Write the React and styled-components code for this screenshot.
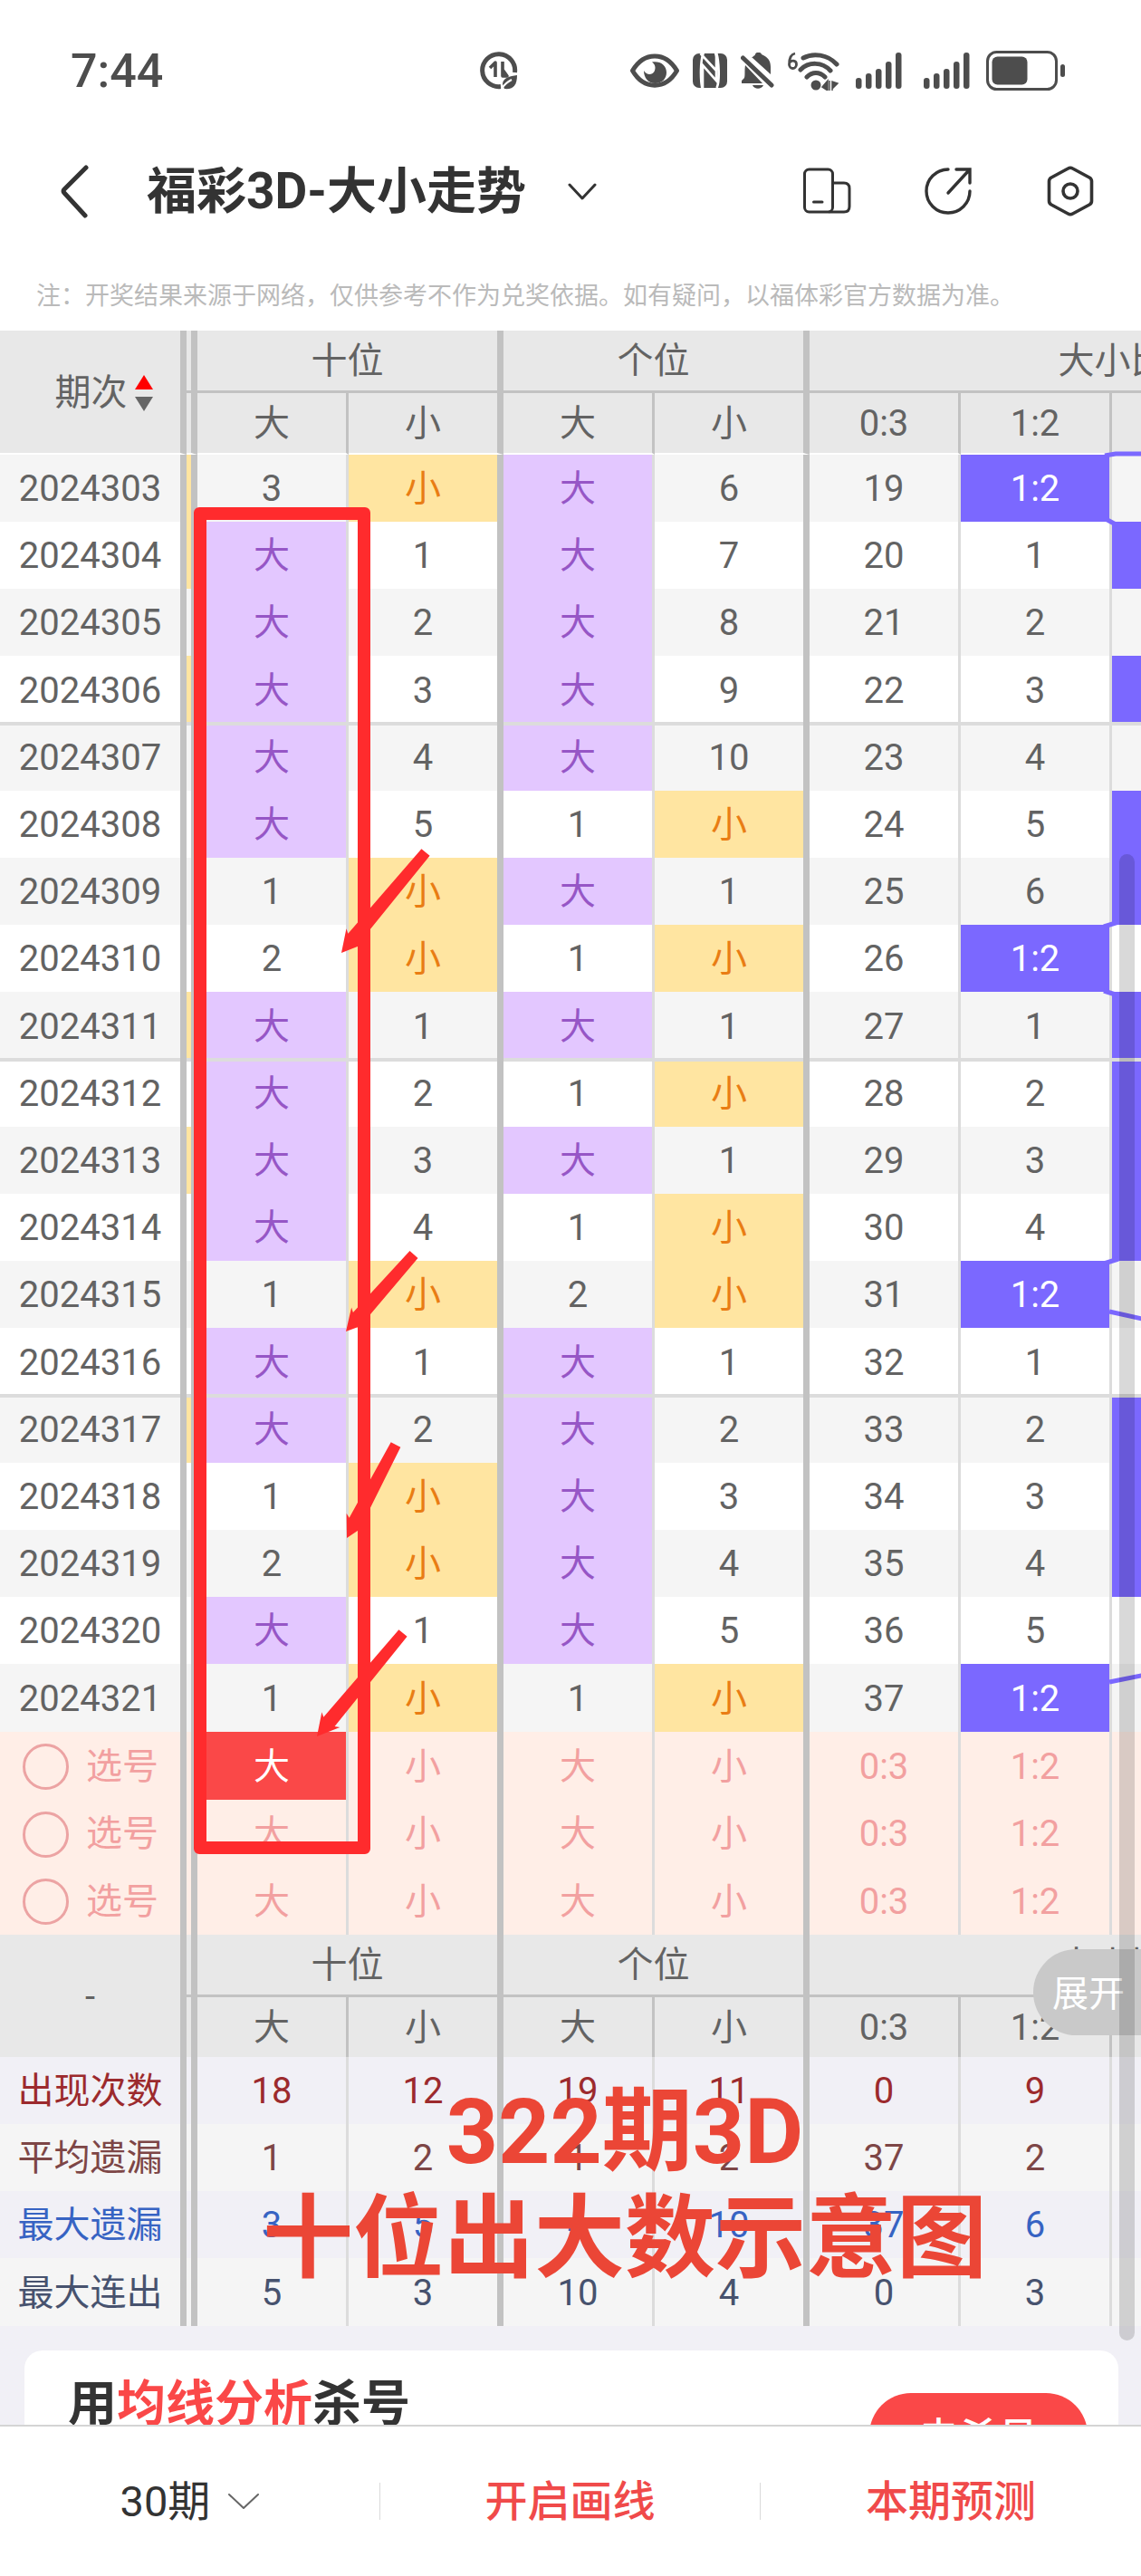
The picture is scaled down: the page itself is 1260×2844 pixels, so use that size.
import styled, { createGlobalStyle, css } from "styled-components";

const GlobalStyle = createGlobalStyle`
    * {
        box-sizing: border-box;
    }

    body {
        margin: 0;
        background: #fff;
        color: #333;
        font-family: Roboto, "Noto Sans CJK SC", sans-serif;
    }

    button,
    select {
        margin: 0;
        padding: 0;
        border: 0;
        background: none;
        color: inherit;
        font: inherit;
    }

    svg {
        display: block;
        flex: none;
    }
`;

// period, edge of the hundreds column, tens big/small, units big/small, 0:3, 1:2, 2:1
const DRAWS = [
    ["2024303", "小", "3", "小", "大", "6", "19", "1:2", ""],
    ["2024304", "小", "大", "1", "大", "7", "20", "1", "2:1"],
    ["2024305", "", "大", "2", "大", "8", "21", "2", ""],
    ["2024306", "小", "大", "3", "大", "9", "22", "3", "2:1"],
    ["2024307", "", "大", "4", "大", "10", "23", "4", ""],
    ["2024308", "", "大", "5", "1", "小", "24", "5", "2:1"],
    ["2024309", "", "1", "小", "大", "1", "25", "6", "2:1"],
    ["2024310", "", "2", "小", "1", "小", "26", "1:2", ""],
    ["2024311", "小", "大", "1", "大", "1", "27", "1", "2:1"],
    ["2024312", "", "大", "2", "1", "小", "28", "2", "2:1"],
    ["2024313", "小", "大", "3", "大", "1", "29", "3", "2:1"],
    ["2024314", "", "大", "4", "1", "小", "30", "4", "2:1"],
    ["2024315", "", "1", "小", "2", "小", "31", "1:2", ""],
    ["2024316", "", "大", "1", "大", "1", "32", "1", ""],
    ["2024317", "小", "大", "2", "大", "2", "33", "2", "2:1"],
    ["2024318", "", "1", "小", "大", "3", "34", "3", "2:1"],
    ["2024319", "", "2", "小", "大", "4", "35", "4", "2:1"],
    ["2024320", "", "大", "1", "大", "5", "36", "5", ""],
    ["2024321", "", "1", "小", "1", "小", "37", "1:2", ""],
];

const LABELS = ["大", "小", "大", "小", "0:3", "1:2"];

const STATS = [
    { name: "出现次数", color: "#9c2a2d", values: [18, 12, 19, 11, 0, 9] },
    { name: "平均遗漏", color: "#7d4646", values: [1, 2, 1, 2, 37, 2] },
    { name: "最大遗漏", color: "#3763c3", values: [3, 5, 4, 10, 37, 6] },
    { name: "最大连出", color: "#47526e", values: [5, 3, 10, 4, 0, 3] },
];

const ARROWS = [
    [470, 576, 377, 687],
    [457, 1020, 382, 1105],
    [437, 1230, 383, 1333],
    [445, 1438, 350, 1552],
];

const TREND_LINES = [
    "M1220 138L1232 136H1270",
    "M1221 208L1234 215",
    "M1219 658L1235 653",
    "M1219 729L1235 734",
    "M1219 1030L1235 1025",
    "M1225 1083L1270 1093",
    "M1225 1492L1270 1483",
];

const Shell = styled.div`
    display: flex;
    flex-direction: column;
    height: 100vh;
    overflow: hidden;
`;

const StatusBar = styled.header`
    display: flex;
    align-items: center;
    flex: none;
    height: 156px;
    padding: 0 84px 0 78px;
    color: #4d4d4d;
`;

const Clock = styled.time`
    padding-top: 2px;
    font-size: 52px;
    font-weight: 500;
    line-height: 60px;
`;

const StatusIcons = styled.div`
    display: flex;
    align-items: center;
    gap: ${({ $gap }) => $gap}px;
`;

const StatusRight = styled(StatusIcons)`
    margin-left: auto;
`;

const NavBar = styled.nav`
    display: flex;
    align-items: center;
    flex: none;
    height: 110px;
    padding: 0 50px 0 63px;
`;

const IconButton = styled.button`
    display: flex;
    align-items: center;
    justify-content: center;
`;

const Title = styled.h1`
    margin: 0 46px 0 61px;
    font-size: 55px;
    font-weight: 700;
    line-height: 64px;
`;

const NavActions = styled.div`
    display: flex;
    align-items: center;
    gap: 80px;
    margin-left: auto;
`;

const Note = styled.p`
    flex: none;
    margin: 0;
    padding: 41px 40px 18px;
    color: #bababa;
    font-size: 27px;
    line-height: 40px;
    white-space: nowrap;
`;

const Content = styled.main`
    position: relative;
    flex: 1;
    min-height: 0;
    overflow: hidden;
    background: #f1f0f6;
`;

const TableScroll = styled.div`
    overflow: hidden;
`;

const Table = styled.table`
    width: 1566px;
    table-layout: fixed;
    border-collapse: separate;
    border-spacing: 0;
    color: #636363;
    font-size: 40px;
    line-height: 48px;
    text-align: center;
`;

const Col = styled.col`
    width: ${({ $w }) => $w}px;
`;

const bar = css`
    border-right: 7px solid #c2c2c2;
`;

const HeadCell = styled.th`
    height: ${({ $group }) => ($group ? 69 : 66)}px;
    padding: 2px 0 0;
    border-right: 3px solid #c2c2c2;
    background: #e8e8e8;
    font-weight: 400;
    ${({ $group }) => $group && "border-bottom: 3px solid #c2c2c2;"}
    ${({ $bar }) => $bar && bar}
`;

const DrawHead = styled.thead`
    & tr:last-child th,
    & th[rowspan] {
        border-bottom: 2px solid #fff;
    }

    & tr:last-child th {
        height: 68px;
    }
`;

const SortLabel = styled.div`
    display: flex;
    align-items: center;
    justify-content: center;
    gap: 8px;
    padding-left: 30px;
`;

const Cell = styled.td`
    height: 74px;
    padding: 2px 0 0;
    border-right: 3px solid #dcdcdc;
    color: inherit;
    font-weight: 400;
    ${({ $bar }) => $bar && bar}
    ${({ $hit }) => $hit === "大" && "background: #e3c7ff; color: #9656c6;"}
    ${({ $hit }) => $hit === "小" && "background: #ffe5a1; color: #e97d14;"}
    ${({ $hit }) => $hit === "ratio" && "background: #7b68ff; color: #fff;"}
    ${({ $picked }) => $picked && "background: #fa4848; color: #fff;"}
`;

const Row = styled.tr`
    background: ${({ $bg }) => $bg};
    color: ${({ $color }) => $color};

    & > * {
        ${({ $start }) => $start && "box-shadow: inset 0 2px #dcdcdc;"}
        ${({ $end }) => $end && "height: 75px;"}
        ${({ $end, $ruled }) => $end && $ruled && "box-shadow: inset 0 -2px #dcdcdc;"}
    }
`;

const PickLabel = styled.label`
    display: flex;
    align-items: center;
    gap: 19px;
    padding-left: 25px;
`;

const PickRadio = styled.input`
    width: 51px;
    height: 51px;
    margin: 0;
    border: 3px solid #eca3a3;
    border-radius: 50%;
    appearance: none;
`;

const PickButton = styled.button`
    width: 100%;
    height: 72px;
`;

const Overlay = styled.svg`
    position: absolute;
    top: 0;
    left: 0;
    pointer-events: none;
`;

const Marker = styled.div`
    position: absolute;
    top: 195px;
    left: 214px;
    width: 195px;
    height: 1487px;
    border: 14px solid #ff2b2d;
    border-radius: 6px;
`;

const Caption = styled.p`
    position: absolute;
    top: 1930px;
    left: 290px;
    width: 800px;
    margin: 0;
    color: #eb4636;
    font-size: 100px;
    font-weight: 700;
    line-height: 118px;
    text-align: center;
    white-space: nowrap;
`;

const ExpandButton = styled.button`
    position: absolute;
    top: 1787px;
    right: 0;
    width: 119px;
    height: 95px;
    padding: 0 0 4px 21px;
    border-radius: 48px 0 0 48px;
    background: #c9c9c9;
    color: #fff;
    font-size: 40px;
    text-align: left;
`;

const ScrollThumb = styled.div`
    position: absolute;
    top: 578px;
    right: 7px;
    width: 17px;
    height: 1641px;
    border-radius: 9px;
    background: rgba(0, 0, 0, 0.15);
`;

const Card = styled.section`
    display: flex;
    align-items: flex-start;
    justify-content: space-between;
    height: 200px;
    margin: 27px 25px 0 27px;
    padding: 28px 34px 0 48px;
    border-radius: 20px;
    background: #fff;
`;

const CardTitle = styled.h2`
    margin: 0;
    font-size: 54px;
    font-weight: 700;
    line-height: 64px;

    & em {
        color: #fa4848;
        font-style: normal;
    }
`;

const CardButton = styled.button`
    width: 241px;
    height: 92px;
    margin-top: 19px;
    border-radius: 46px;
    background: #fa4848;
    color: #fff;
    font-size: 44px;
    font-weight: 500;
`;

const BottomBar = styled.footer`
    display: grid;
    grid-template-columns: repeat(3, 1fr);
    align-items: center;
    flex: none;
    height: 167px;
    border-top: 2px solid #d4d4d4;
    background: #fff;
    font-size: 47px;
    line-height: 60px;
`;

const BottomItem = styled.div`
    display: flex;
    align-items: center;
    justify-content: center;
    gap: 18px;
    height: 41px;
    border-right: 1px solid #dadada;

    &:last-child {
        border-right: 0;
    }
`;

const PeriodSelect = styled.select`
    appearance: none;
    outline: none;
`;

const ActionButton = styled.button`
    color: #f04a4a;
    font-weight: 500;
`;

function Chevron({ width, height, stroke, color = "#333" }) {
    return (
        <svg width={width} height={height} viewBox={`0 0 ${width} ${height}`} fill="none" stroke={color} strokeWidth={stroke} strokeLinecap="round" strokeLinejoin="round">
            <path d={`M2 2L${width / 2} ${height - 2}L${width - 2} 2`} />
        </svg>
    );
}

function SignalIcon() {
    return (
        <svg width="51" height="40" viewBox="0 0 51 40" fill="currentColor">
            <rect x="0" y="28" width="6.500" height="12" rx="3" />
            <rect x="11" y="23" width="6.500" height="17" rx="3" />
            <rect x="22" y="18" width="6.500" height="22" rx="3" />
            <rect x="33" y="10" width="6.500" height="30" rx="3" />
            <rect x="44" y="0" width="6.500" height="40" rx="3" />
        </svg>
    );
}

function DataSaverIcon() {
    return (
        <svg width="42" height="42" viewBox="0 0 42 42" fill="none" stroke="currentColor">
            <path d="M38.500 23A18 18 0 1 0 23 38.500" strokeWidth="5" />
            <path d="M17 28V12L11 18M25 11V27H30L25 20" strokeWidth="3.600" strokeLinejoin="round" />
            <path d="M41 26C33 27 25 29 25 36L27 41C37 42 41 37 41 26Z" fill="currentColor" stroke="none" />
            <path d="M24 41C27 36 31 33 35 31" stroke="#fff" strokeWidth="2" />
        </svg>
    );
}

function EyeIcon() {
    return (
        <svg width="54" height="38" viewBox="0 0 54 38">
            <path d="M2.500 19C15 -2.500 39 -2.500 51.500 19C39 40.500 15 40.500 2.500 19Z" fill="none" stroke="currentColor" strokeWidth="5" strokeLinejoin="round" />
            <path d="M24 9.500C33 8 40 13 40 21C40 28 35 33 27.500 33C20 33 15 27 15 19C18 24 24 24 26.500 20C28.500 16 27.500 12 24 9.500Z" fill="currentColor" />
        </svg>
    );
}

function NfcIcon() {
    return (
        <svg width="38" height="38" viewBox="0 0 38 38">
            <rect width="38" height="38" rx="7" fill="currentColor" />
            <path d="M11 40V13L26 30V4C26 2 25 0 25 -1M8.500 0L26 19M12 -1C8 8 8.500 30 10.500 39M26 -1C29 8 30 31 26.500 38" fill="none" stroke="#fff" strokeWidth="2.600" />
        </svg>
    );
}

function MuteIcon() {
    return (
        <svg width="37" height="40" viewBox="0 0 37 40" fill="currentColor">
            <path d="M13 5C15 3 16 3 16 2C17 -1 22 -1 23 2C30 5 33 9 33 16V24L12 5Z" />
            <path d="M5 14L24 34H1V31L4 28C5 25 4 19 5 14Z" />
            <path d="M2.500 6L34 36" stroke="currentColor" strokeWidth="5" strokeLinecap="round" />
            <path d="M13 36H25C23 41 15 41 13 36Z" />
        </svg>
    );
}

function WifiIcon() {
    return (
        <svg width="57" height="43" viewBox="0 0 57 43" fill="none" stroke="currentColor">
            <path d="M8 2C3 3 1.500 8 1.500 14C1.500 20 9.500 20 9.500 14C9.500 9 3 9 1.500 13" strokeWidth="2.800" />
            <path d="M17 7C28 1 44 3 54 14M14 20C23 11 38 11 47 21M21 28C27 22 35 22 41 28" strokeWidth="5" strokeLinecap="round" />
            <circle cx="31" cy="37" r="5.500" fill="currentColor" stroke="none" />
            <path d="M44 32V43L38 39ZM46 32V43M49 43V33L55 35L49 41Z" fill="currentColor" strokeWidth="1.500" />
        </svg>
    );
}

function BatteryIcon() {
    return (
        <svg width="87" height="44" viewBox="0 0 87 44">
            <rect x="1.500" y="1.500" width="76" height="41" rx="10" fill="none" stroke="currentColor" strokeWidth="3" />
            <rect x="6.500" y="6.500" width="39" height="31" rx="6" fill="currentColor" />
            <rect x="82" y="15" width="5" height="14" rx="2.500" fill="currentColor" />
        </svg>
    );
}

// shaft with a wide head, pointing from (x1, y1) to (x2, y2)
function Arrow({ x1, y1, x2, y2 }) {
    const len = Math.hypot(x2 - x1, y2 - y1);
    const ux = (x2 - x1) / len;
    const uy = (y2 - y1) / len;
    const at = (along, side) => `${x1 + ux * along - uy * side},${y1 + uy * along + ux * side}`;
    const points = [at(0, 6), at(len - 21, 8), at(len - 24, 13), at(len, 0), at(len - 24, -13), at(len - 21, -8), at(0, -6)];
    return <polygon points={points.join(" ")} fill="#ff2b2d" />;
}

function HeadRows({ corner }) {
    return (
        <>
            <tr>
                <HeadCell rowSpan={2} $bar>{corner}</HeadCell>
                <HeadCell $group $bar />
                <HeadCell colSpan={2} $group $bar>十位</HeadCell>
                <HeadCell colSpan={2} $group $bar>个位</HeadCell>
                <HeadCell colSpan={4} $group>大小比</HeadCell>
            </tr>
            <tr>
                <HeadCell $bar />
                {LABELS.map((label, i) => (
                    <HeadCell key={i} $bar={i === 1 || i === 3}>{label}</HeadCell>
                ))}
                <HeadCell />
                <HeadCell />
            </tr>
        </>
    );
}

function DrawRow({ draw, index }) {
    const [period, edge, ...values] = draw;
    return (
        <Row $bg={index % 2 ? "#fff" : "#f5f5f5"} $start={index > 0 && index % 5 === 4} $end={index % 5 === 3} $ruled={index < 18}>
            <Cell as="th" scope="row" $bar>{period}</Cell>
            <Cell $bar $hit={edge} />
            {values.map((value, i) => {
                const ratio = value.includes(":");
                return (
                    <Cell key={i} $bar={i === 1 || i === 3} $hit={ratio ? "ratio" : value}>
                        {i < 6 && value}
                    </Cell>
                );
            })}
            <Cell />
        </Row>
    );
}

function TrendTable() {
    return (
        <Table>
            <colgroup>
                {[206, 12, 167, 171, 167, 171, 167, 167, 167, 171].map((w, i) => (
                    <Col key={i} $w={w} />
                ))}
            </colgroup>
            <DrawHead>
                <HeadRows
                    corner={
                        <SortLabel>
                            期次
                            <svg width="20" height="40" viewBox="0 0 20 40">
                                <path d="M10 0L20 16H0Z" fill="#f00" />
                                <path d="M0 24H20L10 40Z" fill="#666" />
                            </svg>
                        </SortLabel>
                    }
                />
            </DrawHead>
            <tbody>
                {DRAWS.map((draw, i) => (
                    <DrawRow key={draw[0]} draw={draw} index={i} />
                ))}
            </tbody>
            <tbody>
                {[0, 1, 2].map((row) => (
                    <Row key={row} $bg="#ffeee7" $color="#f2a0a0" $end={row !== 1}>
                        <Cell as="th" scope="row" $bar>
                            <PickLabel>
                                <PickRadio type="radio" name="pick" />
                                选号
                            </PickLabel>
                        </Cell>
                        <Cell $bar />
                        {LABELS.map((label, i) => (
                            <Cell key={i} $bar={i === 1 || i === 3} $picked={row === 0 && i === 0}>
                                <PickButton type="button">{label}</PickButton>
                            </Cell>
                        ))}
                        <Cell />
                        <Cell />
                    </Row>
                ))}
            </tbody>
            <tbody>
                <HeadRows corner="-" />
                {STATS.map((stat, row) => (
                    <Row key={stat.name} $bg={row % 2 ? "#f5f5f5" : "#f1f0f6"} $color={stat.color} $end={row === 3}>
                        <Cell as="th" scope="row" $bar>{stat.name}</Cell>
                        <Cell $bar />
                        {stat.values.map((value, i) => (
                            <Cell key={i} $bar={i === 1 || i === 3}>{value}</Cell>
                        ))}
                        <Cell />
                        <Cell />
                    </Row>
                ))}
            </tbody>
        </Table>
    );
}

export default function App() {
    return (
        <Shell>
            <GlobalStyle />
            <StatusBar>
                <Clock>7:44</Clock>
                <StatusRight $gap={124}>
                    <DataSaverIcon />
                    <StatusIcons $gap={18}>
                        <StatusIcons $gap={15}>
                            <EyeIcon />
                            <NfcIcon />
                            <MuteIcon />
                            <WifiIcon />
                        </StatusIcons>
                        <StatusIcons $gap={24}>
                            <SignalIcon />
                            <SignalIcon />
                        </StatusIcons>
                        <BatteryIcon />
                    </StatusIcons>
                </StatusRight>
            </StatusBar>
            <NavBar>
                <IconButton type="button" aria-label="返回">
                    <svg width="38" height="60" viewBox="0 0 38 60" fill="none" stroke="#333" strokeWidth="5" strokeLinecap="round" strokeLinejoin="round">
                        <path d="M32 4L8 28Q6 30 8 32L31 57" />
                    </svg>
                </IconButton>
                <Title>福彩3D-大小走势</Title>
                <IconButton type="button" aria-label="切换走势">
                    <Chevron width={32} height={19} stroke={3} />
                </IconButton>
                <NavActions>
                    <IconButton type="button" aria-label="横屏">
                        <svg width="54" height="54" viewBox="0 0 54 54" fill="none" stroke="#333" strokeWidth="3" strokeLinecap="round">
                            <rect x="2.500" y="3" width="31" height="47" rx="5" />
                            <path d="M34 18H46Q52 18 52 24V44Q52 50 46 50H30M12.500 39H22" />
                        </svg>
                    </IconButton>
                    <IconButton type="button" aria-label="分享">
                        <svg width="54" height="54" viewBox="0 0 54 54" fill="none" stroke="#333" strokeWidth="3.400" strokeLinecap="round">
                            <path d="M27 3A24 24 0 1 0 51 27M27 29L50 4M36 3H51V18" />
                        </svg>
                    </IconButton>
                    <IconButton type="button" aria-label="设置">
                        <svg width="56" height="56" viewBox="0 0 56 56" fill="none" stroke="#333" strokeWidth="3.600" strokeLinejoin="round">
                            <path d="M25.500 3Q28 1.500 30.500 3L49 13Q51.500 14.500 51.500 17V39Q51.500 41.500 49 43L30.500 53Q28 54.500 25.500 53L7 43Q4.500 41.500 4.500 39V17Q4.500 14.500 7 13Z" />
                            <circle cx="28" cy="28" r="8" />
                        </svg>
                    </IconButton>
                </NavActions>
            </NavBar>
            <Note>注：开奖结果来源于网络，仅供参考不作为兑奖依据。如有疑问，以福体彩官方数据为准。</Note>
            <Content>
                <TableScroll>
                    <TrendTable />
                </TableScroll>
                <Card>
                    <CardTitle>
                        用<em>均线分析</em>杀号
                    </CardTitle>
                    <CardButton type="button">去杀号</CardButton>
                </Card>
                <Overlay width="1260" height="1800" viewBox="0 0 1260 1800">
                    {TREND_LINES.map((d) => (
                        <path key={d} d={d} fill="none" stroke="#7b68ff" strokeWidth="5" />
                    ))}
                    {ARROWS.map(([x1, y1, x2, y2]) => (
                        <Arrow key={y1} x1={x1} y1={y1} x2={x2} y2={y2} />
                    ))}
                </Overlay>
                <Marker />
                <Caption>
                    322期3D
                    <br />
                    十位出大数示意图
                </Caption>
                <ExpandButton type="button">展开</ExpandButton>
                <ScrollThumb />
            </Content>
            <BottomBar>
                <BottomItem>
                    <PeriodSelect aria-label="期数" defaultValue="30">
                        <option value="30">30期</option>
                    </PeriodSelect>
                    <Chevron width={36} height={19} stroke={2} color="#666" />
                </BottomItem>
                <BottomItem>
                    <ActionButton type="button">开启画线</ActionButton>
                </BottomItem>
                <BottomItem>
                    <ActionButton type="button">本期预测</ActionButton>
                </BottomItem>
            </BottomBar>
        </Shell>
    );
}
